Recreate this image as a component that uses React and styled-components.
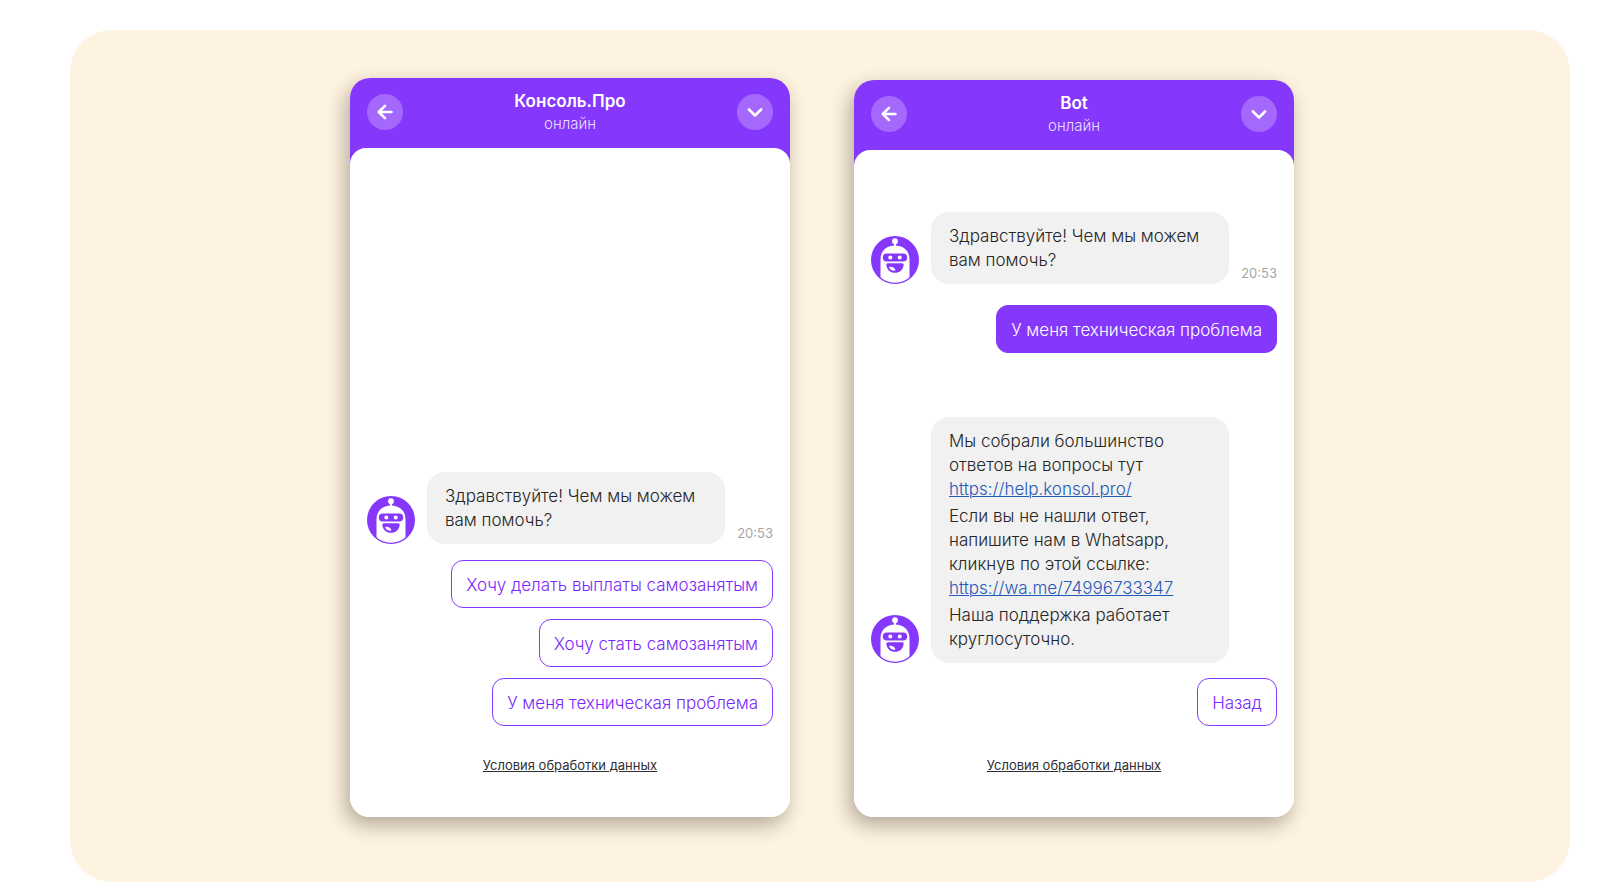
import React from 'react';
import styled, { createGlobalStyle } from 'styled-components';

const violet = '#8538fb';

const GlobalStyle = createGlobalStyle`
  * {
    box-sizing: border-box;
  }
  body {
    margin: 0;
    background: white;
    font-family: Inter, 'Liberation Sans', sans-serif;
  }
`;

const Stage = styled.main`
  display: flex;
  flex-wrap: wrap;
  align-items: flex-end;
  justify-content: center;
  gap: 64px;
  margin: 30px 40px 8px 70px;
  padding: 48px 0 65px 4px;
  border-radius: 42px;
  background: #fef2e0;
`;

const Phone = styled.section`
  display: flex;
  flex-direction: column;
  width: 440px;
  min-height: ${({ $tall }) => ($tall ? 739 : 737)}px;
  border-radius: 20px;
  overflow: hidden;
  background: linear-gradient(${violet} 50%, white 50%);
  box-shadow: -4px 8px 20px rgba(20, 16, 0, 0.32);
`;

const Header = styled.header`
  display: flex;
  align-items: flex-start;
  justify-content: space-between;
  height: 70px;
  padding: 16px 17px 0;
  color: white;
`;

const RoundButton = styled.button`
  display: flex;
  align-items: center;
  justify-content: center;
  width: 36px;
  height: 36px;
  padding: 0;
  border: 0;
  border-radius: 50%;
  background: #a469fc;
  color: white;
`;

const Heading = styled.div`
  margin-top: -4px;
  text-align: center;
`;

const Title = styled.h2`
  margin: 0;
  font-size: 17px;
  font-weight: 600;
  line-height: 23px;
`;

const Status = styled.p`
  margin: 0;
  font-size: 15px;
  font-weight: 300;
  line-height: 22px;
  color: #eadfff;
`;

const Body = styled.div`
  display: flex;
  flex: 1;
  flex-direction: column;
  justify-content: flex-end;
  padding: 0 17px 42px;
  border-radius: 16px 16px 0 0;
  background: white;
`;

const Message = styled.div`
  display: flex;
  align-items: flex-end;
`;

const Bubble = styled.div`
  width: 298px;
  margin-left: 12px;
  padding: 12px 18px;
  border-radius: 18px;
  background: #f1f1f1;
  color: #262626;
  font-size: 17px;
  font-weight: 300;
  line-height: 24px;

  p {
    margin: 0;
  }
  p + p {
    margin-top: 3px;
  }
`;

const Link = styled.a`
  color: #2459b8;
  text-decoration-thickness: 1px;
`;

const Time = styled.time`
  margin-left: auto;
  font-size: 13px;
  line-height: 22px;
  color: #a6a6a6;
`;

const Replies = styled.div`
  display: flex;
  flex-direction: column;
  align-items: flex-end;
  gap: 11px;
  margin: ${({ $gap }) => $gap};
`;

const Reply = styled.button`
  height: 48px;
  padding: 2px 14px 0;
  border: 1px solid ${violet};
  border-radius: 12px;
  background: ${({ $filled }) => ($filled ? violet : 'white')};
  color: ${({ $filled }) => ($filled ? 'white' : '#7a28fa')};
  font-family: inherit;
  font-size: 17px;
  font-weight: 300;
  line-height: 24px;
`;

const Terms = styled.a`
  align-self: center;
  margin-top: 29px;
  font-size: 13px;
  line-height: 20px;
  color: #2f3035;
`;

const BotAvatar = () => (
  <svg width="48" height="48" viewBox="0 0 48 48" role="img" aria-label="Bot">
    <defs>
      <clipPath id="face">
        <circle cx="24" cy="24" r="22.7" />
      </clipPath>
    </defs>
    <circle cx="24" cy="24" r="24" fill={violet} />
    <g clipPath="url(#face)" fill="white">
      <circle cx="24" cy="5.2" r="2.9" />
      <path d="M23 7h2v4h-2z" />
      <path d="M9.5 48V23.5C9.5 15 15.5 9.6 24 9.6S38.5 15 38.5 23.5V48z" />
    </g>
    <rect x="11.8" y="17.6" width="24.4" height="7.8" rx="3.9" fill={violet} />
    <circle cx="19.3" cy="21.4" r="2" fill="white" />
    <circle cx="28.7" cy="21.4" r="2" fill="white" />
    <path
      d="M17 27.3h14c1.3 0 1.8.9 1.6 2.2-.7 4.5-4 7.3-8.6 7.3s-7.9-2.8-8.6-7.3c-.2-1.3.3-2.2 1.6-2.2z"
      fill={violet}
    />
    <path d="M18 31c2.700-.8 6 .6 6.500 3.500-3 .6-5.600-.7-6.500-3.500z" fill="white" />
  </svg>
);

const BackIcon = () => (
  <svg width="18" height="18" viewBox="0 0 18 18" fill="none" stroke="currentColor" strokeWidth="2.6" strokeLinecap="round" strokeLinejoin="round">
    <path d="M15.500 9H3M9 2.800L2.800 9l6.200 6.200" />
  </svg>
);

const DownIcon = () => (
  <svg width="18" height="18" viewBox="0 0 18 18" fill="none" stroke="currentColor" strokeWidth="2.6" strokeLinecap="round" strokeLinejoin="round">
    <path d="M2.900 6.500L9 12.500l6.100-6" />
  </svg>
);

const Chat = ({ title, tall, children }) => (
  <Phone $tall={tall}>
    <Header>
      <RoundButton type="button" aria-label="Назад">
        <BackIcon />
      </RoundButton>
      <Heading>
        <Title>{title}</Title>
        <Status>онлайн</Status>
      </Heading>
      <RoundButton type="button" aria-label="Свернуть">
        <DownIcon />
      </RoundButton>
    </Header>
    <Body>
      {children}
      <Terms href="#terms">Условия обработки данных</Terms>
    </Body>
  </Phone>
);

const Greeting = () => (
  <Message>
    <BotAvatar />
    <Bubble>
      <p>Здравствуйте! Чем мы можем вам помочь?</p>
    </Bubble>
    <Time>20:53</Time>
  </Message>
);

const options = [
  'Хочу делать выплаты самозанятым',
  'Хочу стать самозанятым',
  'У меня техническая проблема',
];

const App = () => (
  <>
    <GlobalStyle />
    <Stage>
      <Chat title="Консоль.Про" tall>
        <Greeting />
        <Replies $gap="16px 0 0">
          {options.map((option) => (
            <Reply type="button" key={option}>
              {option}
            </Reply>
          ))}
        </Replies>
      </Chat>
      <Chat title="Bot">
        <Greeting />
        <Replies $gap="21px 0 64px">
          <Reply type="button" $filled>
            У меня техническая проблема
          </Reply>
        </Replies>
        <Message>
          <BotAvatar />
          <Bubble>
            <p>
              Мы собрали большинство ответов на вопросы тут{' '}
              <Link href="https://help.konsol.pro/">https://help.konsol.pro/</Link>
            </p>
            <p>
              Если вы не нашли ответ, напишите нам в Whatsapp, кликнув по этой ссылке:{' '}
              <Link href="https://wa.me/74996733347">https://wa.me/74996733347</Link>
            </p>
            <p>Наша поддержка работает круглосуточно.</p>
          </Bubble>
        </Message>
        <Replies $gap="15px 0 0">
          <Reply type="button">Назад</Reply>
        </Replies>
      </Chat>
    </Stage>
  </>
);

export default App;
